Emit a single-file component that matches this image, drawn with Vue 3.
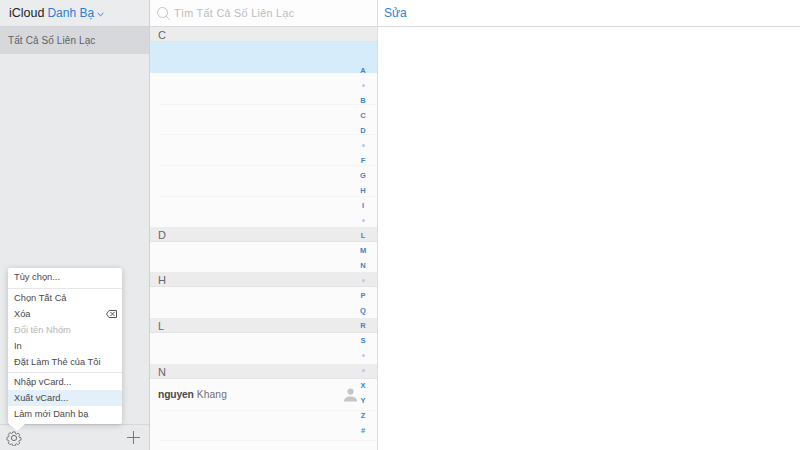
<script setup>
const sections = [
  { letter: 'C', rows: [{ selected: true }, {}, {}, {}, {}, {}] },
  { letter: 'D', rows: [{}] },
  { letter: 'H', rows: [{}] },
  { letter: 'L', rows: [{}] },
  { letter: 'N', rows: [{ first: 'nguyen', last: 'Khang' }, {}, {}] },
]
const index = ['A','•','B','C','D','•','F','G','H','I','•','L','M','N','•','P','Q','R','S','•','•','X','Y','Z','#']
const menuGroups = [
  [{ t: 'Tùy chọn...' }],
  [{ t: 'Chọn Tất Cả' }, { t: 'Xóa', del: true }, { t: 'Đổi tên Nhóm', off: true }, { t: 'In' }, { t: 'Đặt Làm Thẻ của Tôi' }],
  [{ t: 'Nhập vCard...' }, { t: 'Xuất vCard...', hl: true }, { t: 'Làm mới Danh bạ' }],
]
</script>

<template>
  <div class="app">
    <aside class="side">
      <header class="side-head">
        <span class="brand">iCloud</span>
        <span class="app-name">Danh Bạ</span>
        <svg class="chev" width="7" height="5" viewBox="0 0 7 5"><path d="M.6 1l2.900 2.800L6.400 1" fill="none" stroke="#2a7fd8" stroke-width="1"/></svg>
      </header>
      <div class="group">Tất Cả Số Liên Lạc</div>
      <div class="spacer"></div>
      <footer class="side-foot">
        <svg width="16" height="16" viewBox="0 0 16 16" fill="none" stroke="#6f7072" stroke-width="1">
          <path d="M6.7 1.2h2.6l.4 1.9 1.2.5 1.7-1 1.8 1.8-1 1.7.5 1.2 1.9.4v2.6l-1.9.4-.5 1.2 1 1.7-1.8 1.8-1.7-1-1.2.5-.4 1.9H6.700l-.4-1.900-1.200-.5-1.700 1-1.800-1.800 1-1.700-.5-1.200-1.900-.4V7.100l1.900-.4.5-1.200-1-1.700 1.800-1.800 1.700 1 1.200-.5z" transform="translate(.8 .8) scale(.9)"/>
          <circle cx="8" cy="8" r="2.600"/>
        </svg>
        <svg width="13" height="13" viewBox="0 0 13 13" stroke="#77787a" stroke-width="1"><path d="M6.500 0v13M0 6.500h13"/></svg>
      </footer>
      <div class="menu">
        <div v-for="(g, i) in menuGroups" :key="i" class="menu-group">
          <div v-for="m in g" :key="m.t" class="menu-item" :class="{ off: m.off, hl: m.hl }">
            <span>{{ m.t }}</span>
            <svg v-if="m.del" width="11" height="8" viewBox="0 0 11 8"><path d="M3 .5h7.500v7H3L.5 4z" fill="none" stroke="#555" stroke-width="1"/><path d="M4.500 2l4 4M8.500 2l-4 4" stroke="#555" stroke-width="1"/></svg>
          </div>
        </div>
        <span class="arrow"></span>
      </div>
    </aside>

    <section class="list">
      <header class="search">
        <svg width="13" height="13" viewBox="0 0 13 13" fill="none" stroke="#c4c4c6" stroke-width="1"><circle cx="5.500" cy="5.500" r="5"/><path d="M9 9l3.700 3.700"/></svg>
        <span>Tìm Tất Cả Số Liên Lạc</span>
      </header>
      <div class="rows">
        <template v-for="s in sections" :key="s.letter">
          <div class="sec">{{ s.letter }}</div>
          <div v-for="(r, i) in s.rows" :key="i" class="row" :class="{ sel: r.selected }">
            <template v-if="r.first">
              <span class="name"><b>{{ r.first }}</b> {{ r.last }}</span>
              <svg class="person" width="13" height="14" viewBox="0 0 13 14" fill="#c6c6c8"><circle cx="6.500" cy="3.600" r="3.100"/><path d="M0 13.500c0-3.500 2.500-5 6.500-5s6.500 1.500 6.500 5z"/></svg>
            </template>
          </div>
        </template>
        <div class="index">
          <template v-for="(c, i) in index" :key="i">
            <span v-if="c === '•'" class="slot"><i class="dot"></i></span>
            <span v-else class="slot">{{ c }}</span>
          </template>
        </div>
      </div>
    </section>

    <main class="detail">
      <header class="detail-head">Sửa</header>
    </main>
  </div>
</template>

<style>
html, body { margin: 0; background: #fff; }
</style>

<style scoped>
.app { width: 800px; height: 450px; display: flex; overflow: hidden; font-family: "Liberation Sans", Arial, sans-serif; color: #4a4a4c; }
.side { position: relative; width: 149px; flex: none; display: flex; flex-direction: column; background: #e9eaec; border-right: 1px solid #d0d1d4; }
.side-head { height: 26px; flex: none; display: flex; align-items: center; padding-left: 9px; gap: 3px; font-size: 12.500px; border-bottom: 1px solid #d3d5d9; background: #ebecee; }
.brand { color: #222; }
.app-name { color: #2a7fd8; font-size: 12px; }
.chev { margin-top: 2px; }
.group { height: 27px; flex: none; display: flex; align-items: center; padding-left: 8px; font-size: 10px; letter-spacing: .1px; color: #606164; background: #d7d8dc; }
.spacer { flex: 1; }
.side-foot { height: 25px; flex: none; display: flex; align-items: center; justify-content: space-between; padding: 0 9px 0 6px; border-top: 1px solid #d6d7da; }
.menu { position: absolute; left: 8px; top: 268px; width: 114px; background: #fff; border-radius: 2px; box-shadow: 0 1px 6px rgba(0,0,0,.2); font-size: 9.300px; color: #47484a; }
.menu-group { padding: 1px 0 2px; border-bottom: 1px solid #e6e6e8; }
.menu-group:first-child { padding-bottom: 3px; }
.menu-group:last-of-type { border-bottom: 0; padding-bottom: 2px; }
.menu-item { height: 16px; display: flex; align-items: center; justify-content: space-between; padding: 0 5px 0 6px; }
.menu-item.off { color: #b4b5b7; }
.menu-item.hl { background: #e3f0fa; }
.arrow { position: absolute; left: 1px; bottom: -7px; width: 0; height: 0; border-left: 8px solid transparent; border-right: 8px solid transparent; border-top: 7px solid #fff; }
.list { width: 227px; flex: none; display: flex; flex-direction: column; background: #fbfbfb; border-right: 1px solid #dcdde0; }
.search { height: 26px; flex: none; display: flex; align-items: center; gap: 4px; padding-left: 7px; font-size: 10.800px; letter-spacing: .3px; color: #bcbcbe; background: #fdfdfd; border-bottom: 1px solid #d8dadd; }
.rows { position: relative; flex: 1; overflow: hidden; }
.sec { height: 15px; box-sizing: border-box; padding: 1px 0 0 8px; line-height: 14px; font-size: 11px; color: #666668; background: #ececed; border-bottom: 1px solid #e4e4e5; }
.row { height: 30.750px; box-sizing: border-box; position: relative; display: flex; align-items: center; justify-content: space-between; padding: 0 20px 0 8px; }
.row + .row::before { content: ""; position: absolute; left: 10px; right: 0; top: 0; border-top: 1px solid #f4f4f5; }
.row.sel { background: #d6ecfa; }
.row.sel + .row::before { border-top: 0; }
.name { font-size: 10.300px; letter-spacing: .1px; color: #707072; }
.name b { color: #4a4a4c; letter-spacing: -.15px; }
.person { margin-top: 1px; }
.index { position: absolute; right: 8px; top: 35.500px; width: 12px; display: flex; flex-direction: column; align-items: center; }
.slot { height: 15px; display: flex; align-items: center; justify-content: center; font-size: 7.500px; font-weight: 700; color: #3f83cc; }
.dot { width: 3px; height: 3px; border-radius: 50%; background: #b5cde8; }
.detail { flex: 1; }
.detail-head { height: 26px; display: flex; align-items: center; padding-left: 6px; font-size: 12px; color: #2a7fd8; border-bottom: 1px solid #d8dadd; }
</style>
